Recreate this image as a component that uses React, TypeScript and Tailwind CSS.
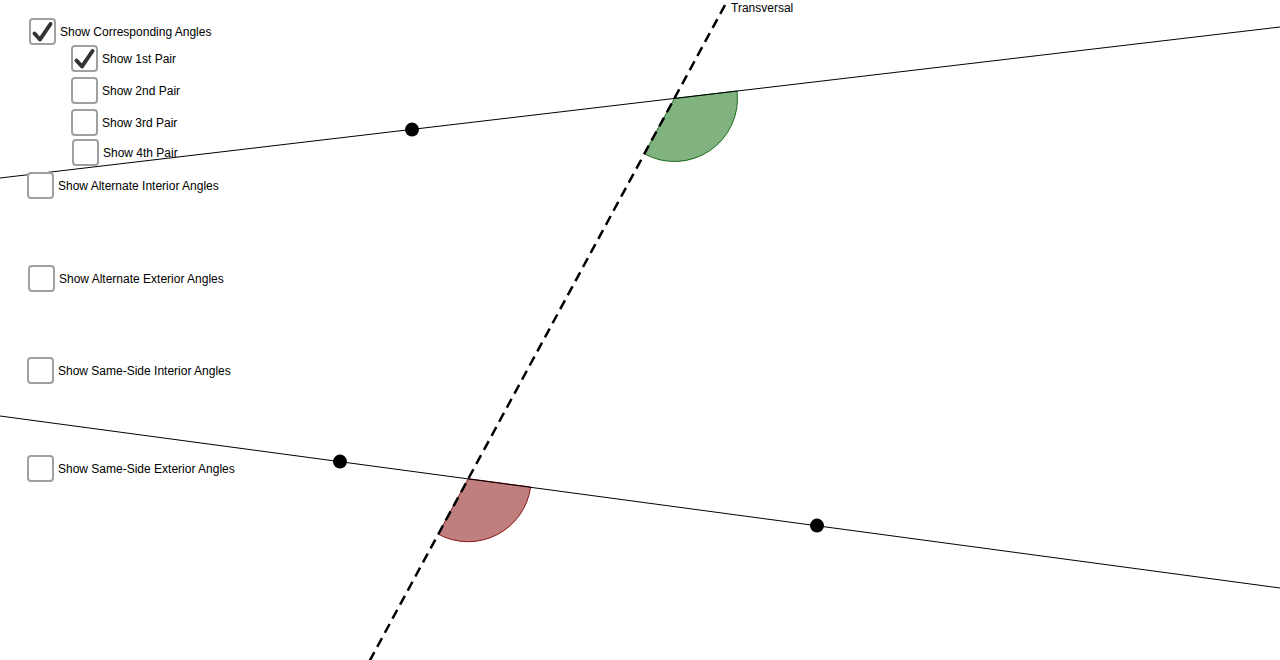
import React from "react";

type Box = { label: string; checked?: boolean; ml: string; mt: string };

const boxes: Box[] = [
  { label: "Show Corresponding Angles", checked: true, ml: "ml-[29px]", mt: "mt-[18px]" },
  { label: "Show 1st Pair", checked: true, ml: "ml-[71px]", mt: "mt-0" },
  { label: "Show 2nd Pair", ml: "ml-[71px]", mt: "mt-[5px]" },
  { label: "Show 3rd Pair", ml: "ml-[71px]", mt: "mt-[5px]" },
  { label: "Show 4th Pair", ml: "ml-[72px]", mt: "mt-[3px]" },
  { label: "Show Alternate Interior Angles", ml: "ml-[27px]", mt: "mt-[6px]" },
  { label: "Show Alternate Exterior Angles", ml: "ml-[28px]", mt: "mt-[66px]" },
  { label: "Show Same-Side Interior Angles", ml: "ml-[27px]", mt: "mt-[65px]" },
  { label: "Show Same-Side Exterior Angles", ml: "ml-[27px]", mt: "mt-[71px]" },
];

function CheckRow({ b }: { b: Box }) {
  return (
    <div className={`flex items-center gap-[4px] ${b.ml} ${b.mt}`}>
      <div className="w-[27px] h-[27px] shrink-0 rounded-[4px] border-2 border-[#a0a0a0] bg-white flex items-center justify-center">
        {b.checked && (
          <svg width="27" height="27" viewBox="0 0 27 27" className="-m-[2px]">
            <path
              d="M5.5 15.5 L11 21.5 L21.5 6"
              fill="none"
              stroke="#333"
              strokeWidth="4"
              strokeLinecap="round"
              strokeLinejoin="round"
            />
          </svg>
        )}
      </div>
      <span className="text-[12px] leading-none text-black whitespace-nowrap">{b.label}</span>
    </div>
  );
}

function Construction() {
  // transversal and the two lines, with two highlighted angles
  const green = "M674.4 98.4 L737 91 A63 63 0 0 1 644.3 153.8 Z";
  const red = "M468.2 478.7 L530.6 487 A63 63 0 0 1 438.1 534.1 Z";
  return (
    <svg className="absolute inset-0" width="1280" height="660" viewBox="0 0 1280 660">
      <path d={green} fill="#80b37f" stroke="#1e6b1e" strokeWidth="1" />
      <path d={red} fill="#c07f7f" stroke="#8a1515" strokeWidth="1" />
      <line x1="0" y1="178" x2="1280" y2="27" stroke="#000" strokeWidth="1" />
      <line x1="0" y1="416" x2="1280" y2="588" stroke="#000" strokeWidth="1" />
      <line
        x1="725"
        y1="5"
        x2="369"
        y2="662"
        stroke="#000"
        strokeWidth="2.5"
        strokeDasharray="10 6"
      />
      <circle cx="412" cy="129.6" r="7" fill="#000" />
      <circle cx="340" cy="461.6" r="7" fill="#000" />
      <circle cx="817" cy="525.6" r="7" fill="#000" />
      <text
        x="731"
        y="12"
        fontSize="12"
        fontFamily="'Liberation Sans', Arial, sans-serif"
        fill="#000"
      >
        Transversal
      </text>
    </svg>
  );
}

export default function App() {
  return (
    <div
      className="relative w-[1280px] h-[660px] overflow-hidden bg-white"
      style={{ fontFamily: "'Liberation Sans', Arial, sans-serif" }}
    >
      <Construction />
      <div className="relative flex flex-col items-start">
        {boxes.map((b) => (
          <CheckRow key={b.label} b={b} />
        ))}
      </div>
    </div>
  );
}
